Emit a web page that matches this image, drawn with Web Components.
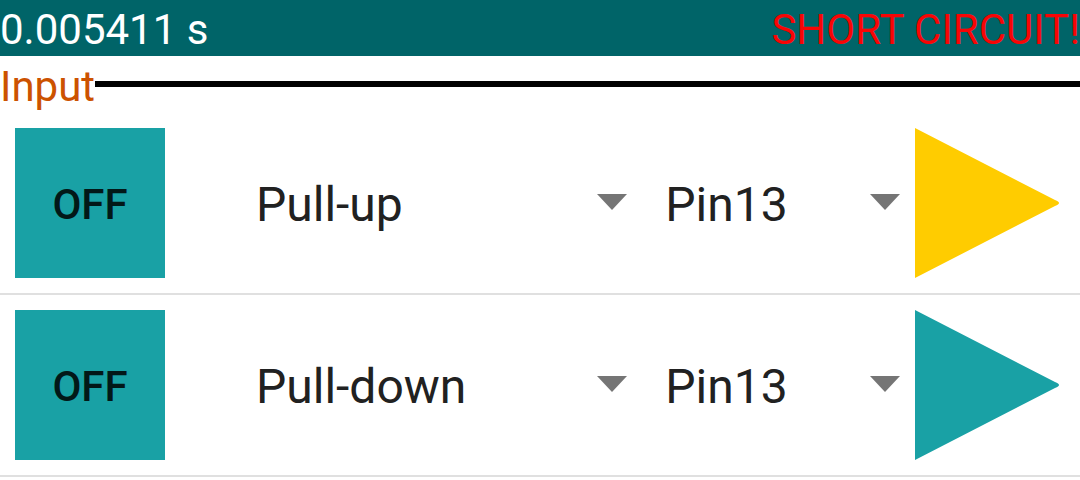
<!DOCTYPE html>
<html lang="en">
<head>
<meta charset="utf-8">
<meta name="viewport" content="width=device-width, initial-scale=1">
<title>Circuit simulator</title>
<style>
  body { margin: 0; background: #fff; color: #212121; font-family: Roboto, "Liberation Sans", sans-serif; }
</style>
</head>
<body>
<sim-status>
  <span slot="time">0.005411 s</span>
  <span slot="alert">SHORT CIRCUIT!</span>
</sim-status>
<main>
  <sim-section heading="Input">
    <input-row mode="Pull-up" pin="Pin13" level="high"></input-row>
    <input-row mode="Pull-down" pin="Pin13"></input-row>
  </sim-section>
</main>
<script>
  class SimStatus extends HTMLElement {
    constructor() {
      super();
      this.attachShadow({ mode: "open" }).innerHTML = `
        <style>
          :host { display: block; background: #006468; color: #fff; }
          header { display: flex; justify-content: space-between; padding-top: 4px; font-size: 42px; line-height: 52px; white-space: nowrap; }
          .alert { color: #f80505; }
        </style>
        <header>
          <slot name="time"></slot>
          <div class="alert" role="alert"><slot name="alert"></slot></div>
        </header>`;
    }
  }

  class SimSection extends HTMLElement {
    connectedCallback() {
      if (this.shadowRoot) return;
      this.attachShadow({ mode: "open" }).innerHTML = `
        <style>
          :host { display: block; }
          .title { display: flex; align-items: center; }
          h2 { margin: 0; padding-top: 5px; font-size: 42px; font-weight: 400; line-height: 52px; color: #cc5200; }
          .rule { flex: 1; height: 6px; margin-bottom: 1px; background: #000; }
        </style>
        <section>
          <div class="title"><h2></h2><div class="rule"></div></div>
          <slot></slot>
        </section>`;
      this.shadowRoot.querySelector("h2").textContent = this.getAttribute("heading");
    }
  }

  class DropDown extends HTMLElement {
    connectedCallback() {
      if (this.shadowRoot) return;
      this.attachShadow({ mode: "open" }).innerHTML = `
        <style>
          :host { display: grid; min-width: 0; align-items: center; }
          select, svg { grid-area: 1 / 1; }
          select {
            appearance: none; width: 100%; height: 72px; margin: 0; border: 0; border-radius: 0;
            padding: 3px 48px 0 23px; background: transparent; color: #212121;
            font: 400 48px Roboto, "Liberation Sans", sans-serif;
          }
          svg { justify-self: end; width: 30px; height: 18px; margin-right: 15px; pointer-events: none; }
        </style>
        <select></select>
        <svg viewBox="0 0 30 18" aria-hidden="true"><path d="M0 0H30L15 16Z" fill="#757575"/></svg>`;
      const select = this.shadowRoot.querySelector("select");
      select.setAttribute("aria-label", this.getAttribute("label"));
      const value = this.getAttribute("value");
      for (const text of this.getAttribute("options").split(",")) {
        select.add(new Option(text, text, text === value, text === value));
      }
    }
  }
  customElements.define("drop-down", DropDown);

  class InputRow extends HTMLElement {
    connectedCallback() {
      if (this.shadowRoot) return;
      const color = this.getAttribute("level") === "high" ? "#ffcc00" : "#19a1a5";
      this.attachShadow({ mode: "open" }).innerHTML = `
        <style>
          :host { display: block; border-bottom: 2px solid #e0e0e0; }
          .row { display: grid; grid-template-columns: 218px 3fr 2fr 150px; align-items: center; padding: 15px; }
          button {
            width: 150px; height: 150px; margin: 0; border: 0; border-radius: 0; padding: 3px 0 0;
            background: #19a1a5; color: #021818;
            font: 500 42px Roboto, "Liberation Sans", sans-serif;
          }
          svg { display: block; width: 150px; height: 150px; }
        </style>
        <div class="row">
          <button type="button" aria-pressed="false">OFF</button>
          <drop-down label="Input type" options="Pull-up,Pull-down" value="${this.getAttribute("mode")}"></drop-down>
          <drop-down label="Pin" options="Pin12,Pin13" value="${this.getAttribute("pin")}"></drop-down>
          <svg viewBox="0 0 150 150" role="img" aria-label="Signal"><path d="M0 0L140 72Q148 75 140 78L0 150Z" fill="${color}"/></svg>
        </div>`;
    }
  }

  customElements.define("sim-status", SimStatus);
  customElements.define("sim-section", SimSection);
  customElements.define("input-row", InputRow);
</script>
</body>
</html>
